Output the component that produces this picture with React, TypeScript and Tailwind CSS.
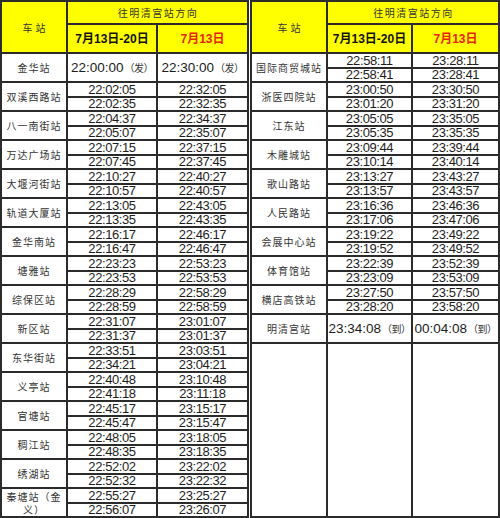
import type { ReactNode } from 'react';

type Stop = { name: string; a: [string, string]; b: [string, string] };

const leftStops: Stop[] = [
  { name: '双溪西路站', a: ['22:02:05', '22:02:35'], b: ['22:32:05', '22:32:35'] },
  { name: '八一南街站', a: ['22:04:37', '22:05:07'], b: ['22:34:37', '22:35:07'] },
  { name: '万达广场站', a: ['22:07:15', '22:07:45'], b: ['22:37:15', '22:37:45'] },
  { name: '大堰河街站', a: ['22:10:27', '22:10:57'], b: ['22:40:27', '22:40:57'] },
  { name: '轨道大厦站', a: ['22:13:05', '22:13:35'], b: ['22:43:05', '22:43:35'] },
  { name: '金华南站', a: ['22:16:17', '22:16:47'], b: ['22:46:17', '22:46:47'] },
  { name: '塘雅站', a: ['22:23:23', '22:23:53'], b: ['22:53:23', '22:53:53'] },
  { name: '综保区站', a: ['22:28:29', '22:28:59'], b: ['22:58:29', '22:58:59'] },
  { name: '新区站', a: ['22:31:07', '22:31:37'], b: ['23:01:07', '23:01:37'] },
  { name: '东华街站', a: ['22:33:51', '22:34:21'], b: ['23:03:51', '23:04:21'] },
  { name: '义亭站', a: ['22:40:48', '22:41:18'], b: ['23:10:48', '23:11:18'] },
  { name: '官塘站', a: ['22:45:17', '22:45:47'], b: ['23:15:17', '23:15:47'] },
  { name: '稠江站', a: ['22:48:05', '22:48:35'], b: ['23:18:05', '23:18:35'] },
  { name: '绣湖站', a: ['22:52:02', '22:52:32'], b: ['23:22:02', '23:22:32'] },
  { name: '秦塘站（金义）', a: ['22:55:27', '22:56:07'], b: ['23:25:27', '23:26:07'] },
];

const rightStops: Stop[] = [
  { name: '国际商贸城站', a: ['22:58:11', '22:58:41'], b: ['23:28:11', '23:28:41'] },
  { name: '浙医四院站', a: ['23:00:50', '23:01:20'], b: ['23:30:50', '23:31:20'] },
  { name: '江东站', a: ['23:05:05', '23:05:35'], b: ['23:35:05', '23:35:35'] },
  { name: '木雕城站', a: ['23:09:44', '23:10:14'], b: ['23:39:44', '23:40:14'] },
  { name: '歌山路站', a: ['23:13:27', '23:13:57'], b: ['23:43:27', '23:43:57'] },
  { name: '人民路站', a: ['23:16:36', '23:17:06'], b: ['23:46:36', '23:47:06'] },
  { name: '会展中心站', a: ['23:19:22', '23:19:52'], b: ['23:49:22', '23:49:52'] },
  { name: '体育馆站', a: ['23:22:39', '23:23:09'], b: ['23:52:39', '23:53:09'] },
  { name: '横店高铁站', a: ['23:27:50', '23:28:20'], b: ['23:57:50', '23:58:20'] },
];

const cjk = "font-['Noto_Sans_CJK_SC',sans-serif]";
const num = "font-['Liberation_Sans','Noto_Sans_CJK_SC',sans-serif]";

const Cell = ({ className = '', children }: { className?: string; children?: ReactNode }) => (
  <div className={`flex items-center justify-center overflow-hidden bg-white ${className}`}>{children}</div>
);

const Station = ({ name, span = 'row-span-2' }: { name: string; span?: string }) => (
  <Cell className={`${span} px-[2px] text-center`}>
    <span className={`${cjk} text-[10px] leading-[13px] tracking-[1px] text-[#333]`}>{name}</span>
  </Cell>
);

const Time = ({ value }: { value: string }) => (
  <Cell>
    <span className={`${num} text-[13px] leading-none tracking-[-0.4px] text-[#1c1c1c]`}>{value}</span>
  </Cell>
);

// 始发 / 终到 rows: time plus a bracketed note
const Terminal = ({ value, mark }: { value: string; mark: string }) => (
  <Cell className="row-span-2">
    <span className={`${num} flex items-center whitespace-nowrap text-[13.5px] leading-none text-[#1c1c1c]`}>
      {value}
      <span className={`${cjk} ml-[1px] text-[10px] tracking-[-0.5px] text-[#333]`}>（{mark}）</span>
    </span>
  </Cell>
);

const Header = () => (
  <>
    <div className="row-span-2 flex items-center justify-center bg-[#ffff00]">
      <span className={`${cjk} pl-[3px] text-[10px] tracking-[3px] text-[#333]`}>车站</span>
    </div>
    <div className="col-span-2 flex items-center justify-center bg-[#ffff00]">
      <span className={`${cjk} pl-[1px] text-[10px] tracking-[1.5px] text-[#333]`}>往明清宫站方向</span>
    </div>
    <div className="flex items-center justify-center bg-[#ffff00]">
      <span className={`${num} text-[12px] font-bold text-[#111]`}>7月13日-20日</span>
    </div>
    <div className="flex items-center justify-center bg-[#ffff00]">
      <span className={`${num} text-[12px] font-bold text-[#e8250c]`}>7月13日</span>
    </div>
  </>
);

const Rows = ({ stops }: { stops: Stop[] }) => (
  <>
    {stops.map((s) => (
      <div key={s.name} className="contents">
        <Station name={s.name} />
        <Time value={s.a[0]} />
        <Time value={s.b[0]} />
        <Time value={s.a[1]} />
        <Time value={s.b[1]} />
      </div>
    ))}
  </>
);

export default function App() {
  return (
    <div className="flex h-[518px] w-[500px] gap-[1px] bg-white">
      <div className="grid h-[518px] w-[249px] grid-cols-[64px_88px_89px] grid-rows-[21px_27px_repeat(32,minmax(0,1fr))] gap-[2px] bg-[#2b2b2b] p-[2px]">
        <Header />
        <Station name="金华站" />
        <Terminal value="22:00:00" mark="发" />
        <Terminal value="22:30:00" mark="发" />
        <Rows stops={leftStops} />
      </div>
      <div className="grid h-[518px] w-[250px] grid-cols-[74px_83px_85px] grid-rows-[21px_27px_repeat(32,minmax(0,1fr))] gap-[2px] bg-[#2b2b2b] p-[2px]">
        <Header />
        <Rows stops={rightStops} />
        <Station name="明清宫站" />
        <Terminal value="23:34:08" mark="到" />
        <Terminal value="00:04:08" mark="到" />
        <Cell className="row-span-12" />
        <Cell className="row-span-12" />
        <Cell className="row-span-12" />
      </div>
    </div>
  );
}
